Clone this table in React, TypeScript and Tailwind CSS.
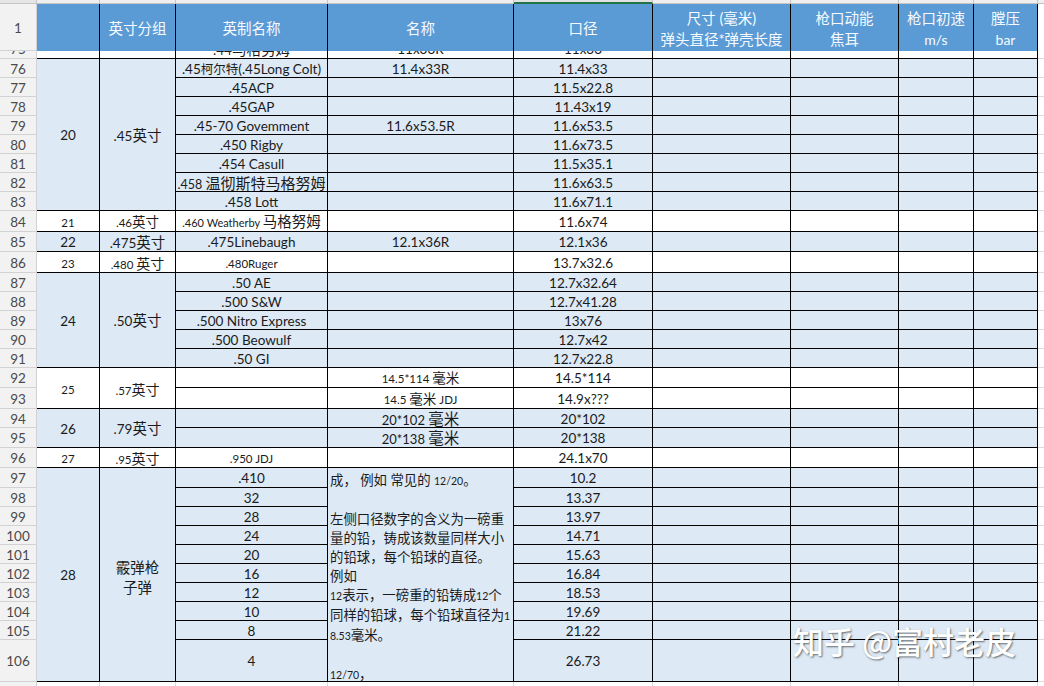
import React from 'react';

const CJK = /([\u2E80-\u9FFF\uF900-\uFAFF\uFF00-\uFFEF\u3000-\u303F]+)/;

function T({ s, c = 'text-[14.5px]' }: { s: string; c?: string }) {
  const parts = s.split(CJK);
  return (
    <span className="whitespace-pre">
      {parts.map((p, i) =>
        i % 2 === 1 ? (
          <span key={i} className={c}>
            {p}
          </span>
        ) : (
          <React.Fragment key={i}>{p}</React.Fragment>
        )
      )}
    </span>
  );
}

function Cell({
  children,
  blue,
  span = '',
  size = 'text-[13.5px]',
  top = false,
}: {
  children?: React.ReactNode;
  blue?: boolean;
  span?: string;
  size?: string;
  top?: boolean;
}) {
  return (
    <div
      className={`${span} ${blue ? 'bg-[#dde9f5]' : 'bg-white'} ${size} ${
        top ? 'items-start justify-start' : 'items-center justify-center pt-[3px]'
      } flex border-r border-b border-black whitespace-nowrap overflow-hidden text-[#1b1b1b] leading-none`}
    >
      {children}
    </div>
  );
}

function RH({ n }: { n?: React.ReactNode }) {
  return (
    <div className="flex items-center justify-center pt-[3px] bg-[#f2f2f2] border-r border-b border-[#d2d2d2] text-[13.5px] text-[#4a4a4a] leading-none">
      {n}
    </div>
  );
}

function X() {
  return <div className="bg-white border-b border-[#dadada]" />;
}

function Blank4({ blue }: { blue?: boolean }) {
  return (
    <>
      <Cell blue={blue} />
      <Cell blue={blue} />
      <Cell blue={blue} />
      <Cell blue={blue} />
    </>
  );
}

function H({ children }: { children?: React.ReactNode }) {
  return (
    <div className="flex flex-col items-center justify-center pt-[2px] bg-[#5b9bd5] border-r border-black text-[14.5px] leading-[21px] text-[#f7faff] whitespace-nowrap">
      {children}
    </div>
  );
}

function Clip({ children, head }: { children?: React.ReactNode; head?: boolean }) {
  return (
    <div
      className={`flex flex-col justify-end overflow-hidden ${
        head
          ? 'bg-[#f2f2f2] border-r border-b border-[#d2d2d2] text-[13.5px] text-[#4a4a4a]'
          : 'bg-white border-r border-b border-black text-[13.5px] text-[#1b1b1b]'
      }`}
    >
      <div className="h-[19px] shrink-0 flex items-center justify-center pt-[3px] leading-none whitespace-nowrap">{children}</div>
    </div>
  );
}

const g20: [React.ReactNode, string, string][] = [
  [<T s=".45柯尔特(.45Long Colt)" c="text-[12.5px]" />, '11.4x33R', '11.4x33'],
  ['.45ACP', '', '11.5x22.8'],
  ['.45GAP', '', '11.43x19'],
  ['.45-70 Govemment', '11.6x53.5R', '11.6x53.5'],
  ['.450 Rigby', '', '11.6x73.5'],
  ['.454 Casull', '', '11.5x35.1'],
  [
    <span className="text-[12.5px]">
      <T s=".458 温彻斯特马格努姆" c="text-[15px]" />
    </span>,
    '',
    '11.6x63.5',
  ],
  ['.458 Lott', '', '11.6x71.1'],
];

const g24 = [
  ['.50 AE', '12.7x32.64'],
  ['.500 S&W', '12.7x41.28'],
  ['.500 Nitro Express', '13x76'],
  ['.500 Beowulf', '12.7x42'],
  ['.50 GI', '12.7x22.8'],
];

const g28 = [
  ['.410', '10.2'],
  ['32', '13.37'],
  ['28', '13.97'],
  ['24', '14.71'],
  ['20', '15.63'],
  ['16', '16.84'],
  ['12', '18.53'],
  ['10', '19.69'],
  ['8', '21.22'],
  ['4', '26.73'],
];

export default function App() {
  return (
    <div className="relative w-[1044px] h-[686px] overflow-hidden bg-white font-[Lato,'Noto_Sans_CJK_SC',sans-serif]">
      <div className="grid grid-cols-[37px_63px_76px_152px_186px_139px_138px_108px_75px_64px_1fr] grid-rows-[4px_47px_8px_repeat(8,19px)_21px_20px_21px_repeat(5,19px)_20px_21px_19px_20px_20px_20px_repeat(8,19px)_42px_20px]">
        {/* column letter strip */}
        <div className="bg-[#e6e6e6] border-r border-b border-[#c4c4c4]" />
        <div className="bg-[#efefef] border-r border-b border-[#c4c4c4]" />
        <div className="bg-[#efefef] border-r border-b border-[#c4c4c4]" />
        <div className="bg-[#efefef] border-r border-b border-[#c4c4c4]" />
        <div className="bg-[#efefef] border-r border-b border-[#c4c4c4]" />
        <div className="bg-[#e2e2e2] border-r border-[#c4c4c4] border-b-2 border-b-[#217346]" />
        <div className="bg-[#efefef] border-r border-b border-[#c4c4c4]" />
        <div className="bg-[#efefef] border-r border-b border-[#c4c4c4]" />
        <div className="bg-[#efefef] border-r border-b border-[#c4c4c4]" />
        <div className="bg-[#efefef] border-r border-b border-[#c4c4c4]" />
        <div className="bg-[#efefef] border-b border-[#c4c4c4]" />

        {/* header row 1 */}
        <RH n="1" />
        <H />
        <H>英寸分组</H>
        <H>英制名称</H>
        <H>名称</H>
        <H>口径</H>
        <H>
          <span>尺寸 (毫米)</span>
          <span>弹头直径*弹壳长度</span>
        </H>
        <H>
          <span>枪口动能</span>
          <span>焦耳</span>
        </H>
        <H>
          <span>枪口初速</span>
          <span className="text-[14px]">m/s</span>
        </H>
        <H>
          <span>膛压</span>
          <span className="text-[14px]">bar</span>
        </H>
        <div className="bg-white" />

        {/* row 75 (clipped) */}
        <Clip head>75</Clip>
        <Clip />
        <Clip />
        <Clip>
          <T s=".44马格努姆" />
        </Clip>
        <Clip>11x33R</Clip>
        <Clip>11x33</Clip>
        <Clip />
        <Clip />
        <Clip />
        <Clip />
        <X />

        {/* group 20 */}
        {g20.map((r, i) => (
          <React.Fragment key={`a${i}`}>
            <RH n={76 + i} />
            {i === 0 && (
              <>
                <Cell blue span="row-span-8">
                  20
                </Cell>
                <Cell blue span="row-span-8">
                  <T s=".45英寸" />
                </Cell>
              </>
            )}
            <Cell blue>{r[0]}</Cell>
            <Cell blue>{r[1]}</Cell>
            <Cell blue>{r[2]}</Cell>
            <Blank4 blue />
            <X />
          </React.Fragment>
        ))}

        {/* 84 */}
        <RH n={84} />
        <Cell size="text-[11.5px]">21</Cell>
        <Cell size="text-[11.5px]">
          <T s=".46英寸" c="text-[13.5px]" />
        </Cell>
        <Cell size="text-[11px]">
          <T s=".460 Weatherby 马格努姆" c="text-[14.5px]" />
        </Cell>
        <Cell />
        <Cell>11.6x74</Cell>
        <Blank4 />
        <X />

        {/* 85 */}
        <RH n={85} />
        <Cell blue>22</Cell>
        <Cell blue>
          <T s=".475英寸" />
        </Cell>
        <Cell blue>.475Linebaugh</Cell>
        <Cell blue>12.1x36R</Cell>
        <Cell blue>12.1x36</Cell>
        <Blank4 blue />
        <X />

        {/* 86 */}
        <RH n={86} />
        <Cell size="text-[11.5px]">23</Cell>
        <Cell size="text-[11.5px]">
          <T s=".480 英寸" c="text-[14px]" />
        </Cell>
        <Cell size="text-[11.5px]">.480Ruger</Cell>
        <Cell />
        <Cell>13.7x32.6</Cell>
        <Blank4 />
        <X />

        {/* group 24 */}
        {g24.map((r, i) => (
          <React.Fragment key={`b${i}`}>
            <RH n={87 + i} />
            {i === 0 && (
              <>
                <Cell blue span="row-span-5">
                  24
                </Cell>
                <Cell blue span="row-span-5">
                  <T s=".50英寸" />
                </Cell>
              </>
            )}
            <Cell blue>{r[0]}</Cell>
            <Cell blue />
            <Cell blue>{r[1]}</Cell>
            <Blank4 blue />
            <X />
          </React.Fragment>
        ))}

        {/* group 25 */}
        <RH n={92} />
        <Cell span="row-span-2" size="text-[11.5px]">
          25
        </Cell>
        <Cell span="row-span-2" size="text-[11.5px]">
          <T s=".57英寸" c="text-[14px]" />
        </Cell>
        <Cell />
        <Cell size="text-[11.5px]">
          <T s="14.5*114 毫米" c="text-[13.5px]" />
        </Cell>
        <Cell>14.5*114</Cell>
        <Blank4 />
        <X />
        <RH n={93} />
        <Cell />
        <Cell size="text-[11.5px]">
          <T s="14.5 毫米 JDJ" c="text-[13.5px]" />
        </Cell>
        <Cell>14.9x???</Cell>
        <Blank4 />
        <X />

        {/* group 26 */}
        <RH n={94} />
        <Cell blue span="row-span-2">
          26
        </Cell>
        <Cell blue span="row-span-2">
          <T s=".79英寸" />
        </Cell>
        <Cell blue />
        <Cell blue size="text-[13px]">
          <T s="20*102 毫米" c="text-[15.5px]" />
        </Cell>
        <Cell blue>20*102</Cell>
        <Blank4 blue />
        <X />
        <RH n={95} />
        <Cell blue />
        <Cell blue size="text-[13px]">
          <T s="20*138 毫米" c="text-[15.5px]" />
        </Cell>
        <Cell blue>20*138</Cell>
        <Blank4 blue />
        <X />

        {/* 96 */}
        <RH n={96} />
        <Cell size="text-[11.5px]">27</Cell>
        <Cell size="text-[11.5px]">
          <T s=".95英寸" c="text-[14px]" />
        </Cell>
        <Cell size="text-[11.5px]">.950 JDJ</Cell>
        <Cell />
        <Cell>24.1x70</Cell>
        <Blank4 />
        <X />

        {/* group 28 */}
        {g28.map((r, i) => (
          <React.Fragment key={`c${i}`}>
            <RH n={97 + i} />
            {i === 0 && (
              <>
                <Cell blue span="row-span-10">
                  28
                </Cell>
                <Cell blue span="row-span-10">
                  <div className="flex flex-col items-center text-[14.5px] leading-[20px] mt-[3px]">
                    <span>霰弹枪</span>
                    <span>子弹</span>
                  </div>
                </Cell>
              </>
            )}
            <Cell blue>{r[0]}</Cell>
            {i === 0 && (
              <Cell blue span="row-span-10" top>
                <div className="flex flex-col pl-[2px] pt-[3px] text-[13.4px] leading-[19px] text-left whitespace-pre">
                  <div>
                    成， 例如 常见的 <span className="text-[10.5px]">12/20</span>。
                  </div>
                  <div> </div>
                  <div>左侧口径数字的含义为一磅重</div>
                  <div>量的铅，铸成该数量同样大小</div>
                  <div>的铅球，每个铅球的直径。</div>
                  <div>例如</div>
                  <div>
                    <span className="text-[10.5px]">12</span>表示，一磅重的铅铸成<span className="text-[10.5px]">12</span>个
                  </div>
                  <div>
                    同样的铅球，每个铅球直径为<span className="text-[10.5px]">1</span>
                  </div>
                  <div>
                    <span className="text-[10.5px]">8.53</span>毫米。
                  </div>
                  <div> </div>
                  <div>
                    <span className="text-[10.5px]">12/70</span>，
                  </div>
                </div>
              </Cell>
            )}
            <Cell blue>{r[1]}</Cell>
            <Blank4 blue />
            <X />
          </React.Fragment>
        ))}

        {/* row 107 */}
        <RH />
        <div className="bg-white border-r border-b border-[#dadada]" />
        <div className="bg-white border-r border-b border-[#dadada]" />
        <div className="bg-white border-r border-b border-[#dadada]" />
        <div className="bg-white border-r border-b border-[#dadada]" />
        <div className="bg-white border-r border-b border-[#dadada]" />
        <div className="bg-white border-r border-b border-[#dadada]" />
        <div className="bg-white border-r border-b border-[#dadada]" />
        <div className="bg-white border-r border-b border-[#dadada]" />
        <div className="bg-white border-r border-b border-[#dadada]" />
        <X />
      </div>

      <div className="absolute left-[793px] top-[624px] text-[31px] leading-[34px] font-medium text-white whitespace-nowrap font-['Noto_Sans_CJK_SC',sans-serif] [text-shadow:1px_1px_2px_rgba(0,0,0,0.55)]">
        知乎 @富村老皮
      </div>
    </div>
  );
}
